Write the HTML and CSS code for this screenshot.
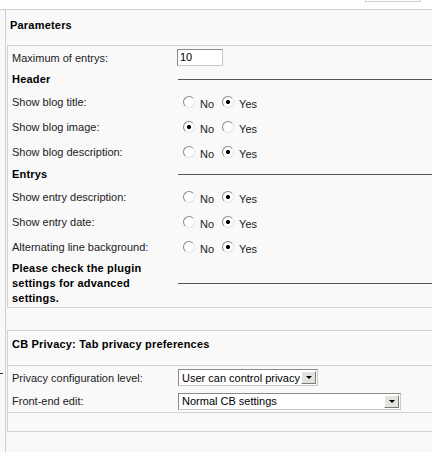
FILE: index.html
```html
<!DOCTYPE html>
<html>
<head>
<meta charset="utf-8">
<link rel="stylesheet" href="styles.css">
</head>
<body>
<div class="top"><div class="topbox"></div></div>
<div class="main">
  <span class="mark"></span>
  <div class="panel">
    <div class="ptitle">Parameters</div>
    <div class="box">
      <div class="row r-input">
        <div class="lbl">Maximum of entrys:</div>
        <div class="val"><input class="txt" type="text" value="10"></div>
      </div>
      <div class="row r-head">
        <div class="lbl b">Header</div>
        <div class="val"><div class="rule"></div></div>
      </div>
      <div class="row r-radio">
        <div class="lbl">Show blog title:</div>
        <div class="val"><input class="rd" type="radio" name="a"><span class="opt">No</span><input class="rd rd2" type="radio" name="a" checked><span class="opt">Yes</span></div>
      </div>
      <div class="row r-radio">
        <div class="lbl">Show blog image:</div>
        <div class="val"><input class="rd" type="radio" name="b" checked><span class="opt">No</span><input class="rd rd2" type="radio" name="b"><span class="opt">Yes</span></div>
      </div>
      <div class="row r-radio">
        <div class="lbl">Show blog description:</div>
        <div class="val"><input class="rd" type="radio" name="c"><span class="opt">No</span><input class="rd rd2" type="radio" name="c" checked><span class="opt">Yes</span></div>
      </div>
      <div class="row r-head">
        <div class="lbl b">Entrys</div>
        <div class="val"><div class="rule"></div></div>
      </div>
      <div class="row r-radio">
        <div class="lbl">Show entry description:</div>
        <div class="val"><input class="rd" type="radio" name="d"><span class="opt">No</span><input class="rd rd2" type="radio" name="d" checked><span class="opt">Yes</span></div>
      </div>
      <div class="row r-radio">
        <div class="lbl">Show entry date:</div>
        <div class="val"><input class="rd" type="radio" name="e"><span class="opt">No</span><input class="rd rd2" type="radio" name="e" checked><span class="opt">Yes</span></div>
      </div>
      <div class="row r-radio">
        <div class="lbl">Alternating line background:</div>
        <div class="val"><input class="rd" type="radio" name="f"><span class="opt">No</span><input class="rd rd2" type="radio" name="f" checked><span class="opt">Yes</span></div>
      </div>
      <div class="row r-note">
        <div class="lbl b"><span class="note">Please check the plugin settings for advanced settings.</span></div>
        <div class="val"><div class="rule"></div></div>
      </div>
    </div>
    <div class="gap"></div>
    <div class="box">
      <div class="btitle">CB Privacy: Tab privacy preferences</div>
      <div class="row r-sel">
        <div class="lbl">Privacy configuration level:</div>
        <div class="val"><div class="sel sel1"><span class="seltxt">User can control privacy</span><span class="btn"></span></div></div>
      </div>
      <div class="row r-sel last">
        <div class="lbl">Front-end edit:</div>
        <div class="val"><div class="sel sel2"><span class="seltxt">Normal CB settings</span><span class="btn"></span></div></div>
      </div>
      <div class="empty"></div>
    </div>
  </div>
</div>
</body>
</html>
```
FILE: styles.css
```css
html, body {
  margin: 0;
  padding: 0;
}
body {
  font-family: "Liberation Sans", Arial, sans-serif;
  font-size: 11px;
  line-height: 14px;
  color: #222;
  background: #fff;
  overflow: hidden;
  height: 452px;
}
.top {
  height: 9px;
  display: flex;
  justify-content: flex-end;
}
.topbox {
  width: 54px;
  height: 1px;
  border: 1px solid #d0d0d0;
  border-top: none;
  margin-right: 11px;
}
.main {
  position: relative;
  border-top: 1px solid #cfcfcf;
  background: #f9f9f9;
  padding-left: 5px;
  height: 442px;
}
.mark {
  position: absolute;
  left: 0;
  top: 363px;
  width: 3px;
  height: 1px;
  background: #333;
}
.panel {
  border-left: 1px solid #cfcfcf;
  height: 100%;
  padding-left: 1px;
}
.ptitle {
  height: 35px;
  box-sizing: border-box;
  padding: 8px 0 0 3px;
  font-weight: bold;
  color: #000;
  letter-spacing: 0.2px;
}
.box {
  border: 1px solid #d2d2d2;
  border-right: none;
}
.row {
  display: flex;
  align-items: center;
}
.lbl {
  width: 170px;
  box-sizing: border-box;
  padding: 0 4px;
  flex: none;
}
.b {
  font-weight: bold;
  color: #000;
  letter-spacing: 0.2px;
}
.note {
  display: block;
  width: 140px;
  line-height: 15px;
}
.val {
  flex: 1;
  display: flex;
  align-items: center;
}
.r-input { height: 23px; }
.r-head { height: 20px; }
.r-radio { height: 25px; }
.r-note { height: 48px; }
.r-sel { height: 23px; }
.r-sel.last { border-bottom: 1px solid #d2d2d2; }
.rule {
  flex: 1;
  height: 0;
  border-top: 1px solid #555;
}
.txt {
  appearance: none;
  -webkit-appearance: none;
  box-sizing: border-box;
  width: 46px;
  height: 17px;
  margin: 0 0 1px -1px;
  padding: 0 2px;
  border: 1px solid #8a8a8a;
  border-right-color: #c8c8c8;
  border-bottom-color: #c8c8c8;
  background: #fff;
  font: 11px "Liberation Sans", Arial, sans-serif;
  color: #000;
}
.rd {
  appearance: none;
  -webkit-appearance: none;
  box-sizing: border-box;
  width: 12px;
  height: 12px;
  margin: 0 5px 0 5px;
  border-radius: 50%;
  border: 1px solid;
  border-color: #8a8a8a #e4e4e4 #e4e4e4 #8a8a8a;
  background: #fff;
  flex: none;
}
.rd:checked {
  background: radial-gradient(circle, #000 0, #000 1.6px, #fff 2.4px);
}
.rd2 {
  margin-left: 8px;
}
.opt {
  margin-top: 4px;
  color: #222;
}
.gap {
  height: 22px;
}
.btitle {
  height: 35px;
  box-sizing: border-box;
  padding: 6px 0 0 4px;
  font-weight: bold;
  color: #000;
  letter-spacing: 0.2px;
  border-bottom: 1px solid #d2d2d2;
}
.sel {
  display: flex;
  align-items: center;
  box-sizing: border-box;
  height: 17px;
  border: 1px solid #8a8a8a;
  border-right-color: #c8c8c8;
  border-bottom-color: #c8c8c8;
  background: #fff;
  padding-left: 3px;
  color: #000;
}
.sel1 { width: 140px; }
.sel2 { width: 223px; margin-top: 1px; }
.seltxt {
  flex: 1;
  white-space: nowrap;
  overflow: hidden;
}
.btn {
  flex: none;
  box-sizing: border-box;
  width: 15px;
  height: 13px;
  margin-right: 1px;
  background: #e4e2dc;
  border: 1px solid;
  border-color: #fff #7a7a7a #7a7a7a #fff;
  position: relative;
}
.btn::after {
  content: "";
  position: absolute;
  left: 4px;
  top: 4px;
  border-left: 3px solid transparent;
  border-right: 3px solid transparent;
  border-top: 3px solid #000;
}
.empty {
  height: 18px;
}
```
